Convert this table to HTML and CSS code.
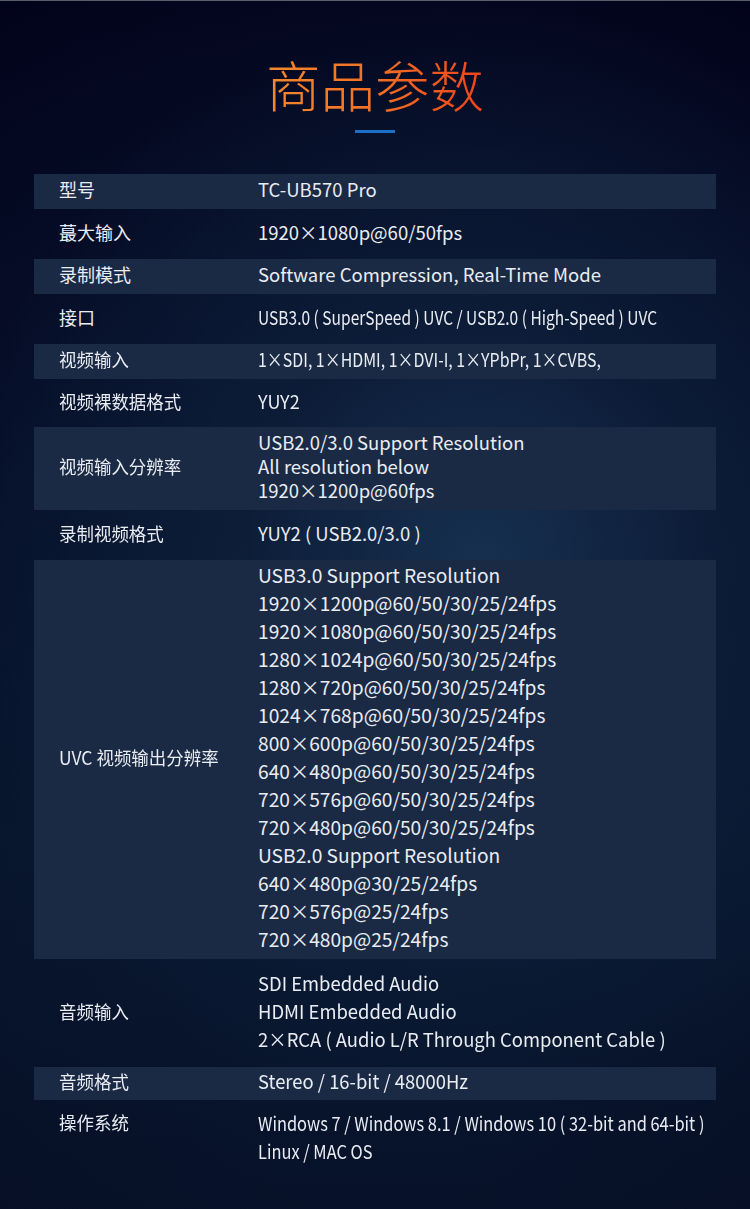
FILE: index.html
```html
<!DOCTYPE html>
<html lang="zh-CN">
<head>
<meta charset="utf-8">
<title>商品参数</title>
<link rel="stylesheet" href="styles.css">
</head>
<body>
<div class="page">
  <header class="head">
    <h1 class="title">商品参数</h1>
    <div class="bar"></div>
  </header>
  <section class="specs">
    <div class="row shade r-std"><div class="label">型号</div><div class="value">TC-UB570 Pro</div></div>
    <div class="row r-std"><div class="label">蕞大输入</div><div class="value">1920×1080p@60/50fps</div></div>
    <div class="row shade r-std"><div class="label">录制模式</div><div class="value">Software Compression, Real-Time Mode</div></div>
    <div class="row r-std"><div class="label">接口</div><div class="value big"><span class="sq sq-a">USB3.0 ( SuperSpeed ) UVC / USB2.0 ( High-Speed ) UVC</span></div></div>
    <div class="row shade r-std"><div class="label"><span class="sq sq-l">视频输入</span></div><div class="value big"><span class="sq sq-b">1×SDI, 1×HDMI, 1×DVI-I, 1×YPbPr, 1×CVBS,</span></div></div>
    <div class="row r-short"><div class="label"><span class="sq sq-l">视频裸数据格式</span></div><div class="value big"><span class="sq sq-f">YUY2</span></div></div>
    <div class="row shade r-three"><div class="label"><span class="sq sq-l">视频输入分辨率</span></div><div class="value lines24">USB2.0/3.0 Support Resolution<br>All resolution below<br>1920×1200p@60fps</div></div>
    <div class="row r-std8"><div class="label"><span class="sq sq-l">录制视频格式</span></div><div class="value">YUY2 ( USB2.0/3.0 )</div></div>
    <div class="row shade r-uvc"><div class="label"><span class="sq sq-l">UVC 视频输出分辨率</span></div><div class="value big lines28">USB3.0 Support Resolution<br>1920×1200p@60/50/30/25/24fps<br>1920×1080p@60/50/30/25/24fps<br>1280×1024p@60/50/30/25/24fps<br>1280×720p@60/50/30/25/24fps<br>1024×768p@60/50/30/25/24fps<br>800×600p@60/50/30/25/24fps<br>640×480p@60/50/30/25/24fps<br>720×576p@60/50/30/25/24fps<br>720×480p@60/50/30/25/24fps<br>USB2.0 Support Resolution<br>640×480p@30/25/24fps<br>720×576p@25/24fps<br>720×480p@25/24fps</div></div>
    <div class="row r-audio"><div class="label"><span class="sq sq-l">音频输入</span></div><div class="value big lines28"><span class="sq sq-c">SDI Embedded Audio<br>HDMI Embedded Audio<br>2×RCA ( Audio L/R Through Component Cable )</span></div></div>
    <div class="row shade r-fmt"><div class="label"><span class="sq sq-l">音频格式</span></div><div class="value big"><span class="sq sq-d">Stereo / 16-bit / 48000Hz</span></div></div>
    <div class="row r-os"><div class="label"><span class="sq sq-l">操作系统</span></div><div class="value big lines28"><span class="sq sq-e">Windows 7 / Windows 8.1 / Windows 10 ( 32-bit and 64-bit )<br>Linux / MAC OS</span></div></div>
  </section>
</div>
</body>
</html>
```
FILE: styles.css
```css
html, body {
  margin: 0;
  padding: 0;
}
body {
  width: 750px;
  height: 1209px;
  overflow: hidden;
  background: #03041a;
  font-family: "Noto Sans CJK SC", "Noto Sans", sans-serif;
  color: #e9edf3;
}
.page {
  width: 750px;
  height: 1209px;
  box-sizing: border-box;
  border-top: 1px solid #5a5e6c;
  background:
    radial-gradient(ellipse 520px 560px at 480px 560px, rgba(26, 54, 88, 0.8) 0%, rgba(16, 36, 64, 0.55) 45%, rgba(6, 14, 36, 0) 100%),
    radial-gradient(ellipse 700px 900px at 375px 720px, rgba(10, 26, 52, 0.9) 0%, rgba(4, 8, 28, 0) 100%),
    linear-gradient(180deg, #02021a 0%, #040822 30%, #071329 70%, #050c22 100%);
}
.head {
  display: flex;
  flex-direction: column;
  align-items: center;
  padding-top: 56px;
}
.title {
  margin: 0;
  font-size: 54.5px;
  line-height: 54.5px;
  font-weight: 300;
  background: linear-gradient(90deg, #f5882c 0%, #f27024 50%, #f0441a 100%);
  -webkit-background-clip: text;
  background-clip: text;
  color: transparent;
}
.bar {
  width: 40px;
  height: 3px;
  margin-top: 18.5px;
  background: #1b6fc6;
}
.specs {
  margin: 41px 34px 0;
  display: flex;
  flex-direction: column;
  gap: 8px;
}
.row {
  display: grid;
  grid-template-columns: 224px 1fr;
  align-items: center;
  font-size: 18.5px;
}
.shade {
  background: #1b2a44;
}
.label {
  padding-left: 25px;
  padding-bottom: 4px;
  font-size: 18px;
  white-space: nowrap;
}
.value {
  white-space: nowrap;
  line-height: 28px;
  padding-bottom: 4px;
}
.big { font-size: 19.2px; }
.lines24 { line-height: 24px; }
.lines28 { line-height: 28px; }
.r-std { height: 34.5px; }
.r-short { height: 32px; }
.r-three { height: 83px; }
.r-std8 { height: 34px; }
.r-uvc { height: 399px; }
.r-audio { height: 92px; }
.r-fmt { height: 33px; }
.r-os { align-items: start; padding-top: 1px; }
.sq {
  display: inline-block;
  transform-origin: 0 50%;
}
.sq-l { transform: scaleX(0.97); }
.sq-a { transform: scaleX(0.81); }
.sq-b { transform: scaleX(0.83); }
.sq-f { transform: scaleX(0.94); }
.sq-c { transform: scaleX(0.96); }
.sq-d { transform: scaleX(0.96); }
.sq-e { transform: scaleX(0.855); }
```
